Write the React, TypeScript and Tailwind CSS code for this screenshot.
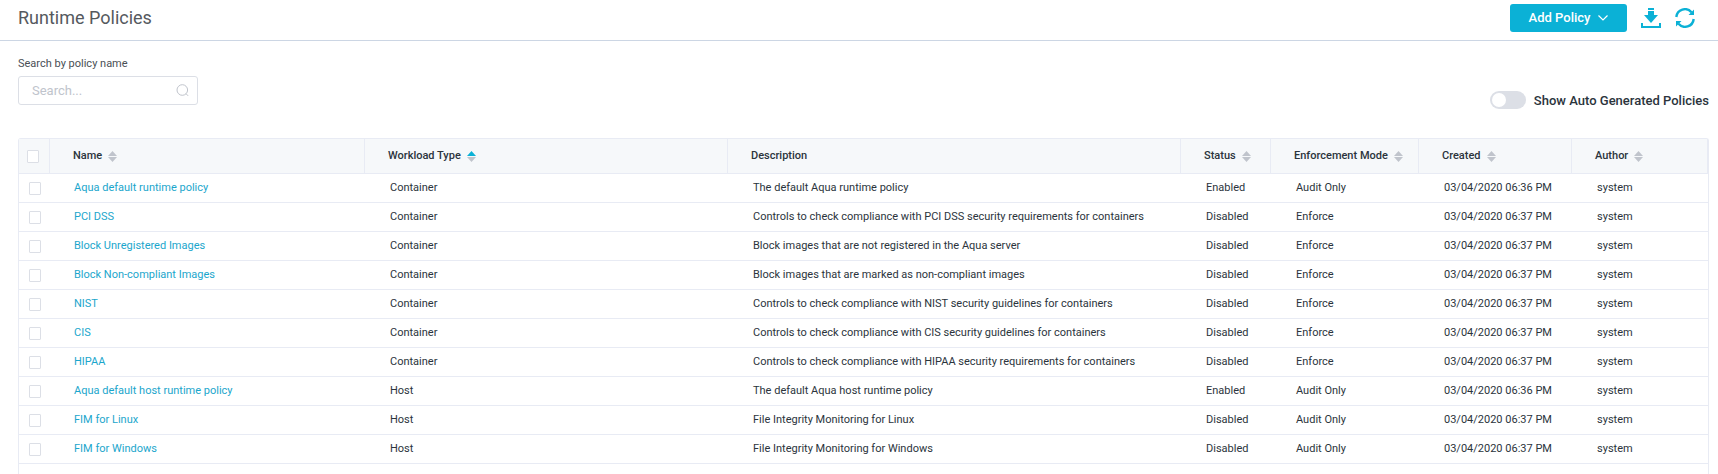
import { useState } from "react";

type Policy = {
  name: string;
  workload: string;
  description: string;
  status: string;
  mode: string;
  created: string;
  author: string;
};

const policies: Policy[] = [
  { name: "Aqua default runtime policy", workload: "Container", description: "The default Aqua runtime policy", status: "Enabled", mode: "Audit Only", created: "03/04/2020 06:36 PM", author: "system" },
  { name: "PCI DSS", workload: "Container", description: "Controls to check compliance with PCI DSS security requirements for containers", status: "Disabled", mode: "Enforce", created: "03/04/2020 06:37 PM", author: "system" },
  { name: "Block Unregistered Images", workload: "Container", description: "Block images that are not registered in the Aqua server", status: "Disabled", mode: "Enforce", created: "03/04/2020 06:37 PM", author: "system" },
  { name: "Block Non-compliant Images", workload: "Container", description: "Block images that are marked as non-compliant images", status: "Disabled", mode: "Enforce", created: "03/04/2020 06:37 PM", author: "system" },
  { name: "NIST", workload: "Container", description: "Controls to check compliance with NIST security guidelines for containers", status: "Disabled", mode: "Enforce", created: "03/04/2020 06:37 PM", author: "system" },
  { name: "CIS", workload: "Container", description: "Controls to check compliance with CIS security guidelines for containers", status: "Disabled", mode: "Enforce", created: "03/04/2020 06:37 PM", author: "system" },
  { name: "HIPAA", workload: "Container", description: "Controls to check compliance with HIPAA security requirements for containers", status: "Disabled", mode: "Enforce", created: "03/04/2020 06:37 PM", author: "system" },
  { name: "Aqua default host runtime policy", workload: "Host", description: "The default Aqua host runtime policy", status: "Enabled", mode: "Audit Only", created: "03/04/2020 06:36 PM", author: "system" },
  { name: "FIM for Linux", workload: "Host", description: "File Integrity Monitoring for Linux", status: "Disabled", mode: "Audit Only", created: "03/04/2020 06:37 PM", author: "system" },
  { name: "FIM for Windows", workload: "Host", description: "File Integrity Monitoring for Windows", status: "Disabled", mode: "Audit Only", created: "03/04/2020 06:37 PM", author: "system" },
];

type Column = { label: string; sort: "none" | "idle" | "asc"; width: string };

const columns: Column[] = [
  { label: "Name", sort: "idle", width: "w-[315px]" },
  { label: "Workload Type", sort: "asc", width: "w-[363px]" },
  { label: "Description", sort: "none", width: "" },
  { label: "Status", sort: "idle", width: "w-[90px]" },
  { label: "Enforcement Mode", sort: "idle", width: "w-[148px]" },
  { label: "Created", sort: "idle", width: "w-[153px]" },
  { label: "Author", sort: "idle", width: "w-[136px]" },
];

function SortIcon({ active }: { active: boolean }) {
  return (
    <svg width="9" height="11" viewBox="0 0 9 11" aria-hidden="true">
      <path d="M4.5 0 9 5H0Z" className={active ? "fill-[#0bb1d6]" : "fill-[#c0c4cc]"} />
      <path d="M0 6h9L4.5 11Z" className="fill-[#c0c4cc]" />
    </svg>
  );
}

function Tick({ label }: { label: string }) {
  return (
    <input
      type="checkbox"
      aria-label={label}
      className="block h-[13px] w-3 appearance-none rounded-[1px] border border-[#dcdfe6] bg-white checked:border-[#0bb1d6] checked:bg-[#0bb1d6]"
    />
  );
}

export default function App() {
  const [auto, setAuto] = useState(false);
  return (
    <div className="bg-white font-['Roboto',sans-serif] text-[#2b343c]">
      <header className="flex h-[41px] items-center justify-between border-b border-[#ccd6e4] pr-[23px] pb-1 pl-[18px]">
        <h1 className="text-lg text-[#55595e]">Runtime Policies</h1>
        <div className="flex items-center gap-[14px]">
          <button type="button" className="flex h-7 w-[117px] items-center justify-center gap-2 rounded-[3px] bg-[#0bb1d6] text-[13px] font-medium text-white">
            Add Policy
            <svg width="10" height="6" viewBox="0 0 10 6" fill="none" stroke="currentColor" strokeWidth="1.2" aria-hidden="true">
              <path d="M.5.5 5 5 9.500.5" />
            </svg>
          </button>
          <button type="button" aria-label="Download" className="text-[#0bb1d6]">
            <svg width="20" height="20" viewBox="0 0 20 20" fill="currentColor" aria-hidden="true">
              <path d="M7 0h6v2H7ZM7 3h6v4h4l-7 8-7-8h4ZM0 15h2v3h16v-3h2v5H0Z" />
            </svg>
          </button>
          <button type="button" aria-label="Refresh" className="text-[#0bb1d6]">
            <svg width="20" height="20" viewBox="0 0 20 20" fill="none" stroke="currentColor" strokeWidth="2.4" aria-hidden="true">
              <path d="M1.300 9A8.700 8.700 0 0 1 16.500 4.200M18.700 11A8.700 8.700 0 0 1 3.500 15.800" />
              <path d="M19 1.500v5.500h-5.500ZM1 18.500v-5.500h5.500Z" fill="currentColor" stroke="none" />
            </svg>
          </button>
        </div>
      </header>

      <main className="pr-[9px] pl-[18px]">
        <div className="flex items-end justify-between pt-[15px]">
          <div>
            <label htmlFor="policy-search" className="block text-[11px] leading-4 text-[#4a4f55]">Search by policy name</label>
            <div className="mt-1 flex h-[29px] w-[180px] items-center rounded-[3px] border border-[#dcdfe6] pr-2 pl-[13px]">
              <input id="policy-search" type="text" placeholder="Search..." className="w-full min-w-0 flex-1 text-[13px] outline-none placeholder:text-[#c0c4cc]" />
              <svg width="13" height="13" viewBox="0 0 13 13" fill="none" className="stroke-[#c0c4cc]" aria-hidden="true">
                <circle cx="6.300" cy="6" r="5.300" />
                <path d="m10 9.700 2.200 2.200" />
              </svg>
            </div>
          </div>
          <label className="-mb-[5px] flex items-center gap-2 text-[13px] font-medium text-[#2b343c]">
            <input
              type="checkbox"
              role="switch"
              checked={auto}
              onChange={() => setAuto(!auto)}
              className="flex h-[18px] w-9 appearance-none items-center rounded-full bg-[#dcdfe6] px-0.5 before:size-[14px] before:rounded-full before:bg-white checked:justify-end checked:bg-[#0bb1d6]"
            />
            Show Auto Generated Policies
          </label>
        </div>

        <div className="mt-[33px] rounded-t-[3px] border border-b-0 border-[#e8ebf4] pb-[10px]">
          <table className="w-full table-fixed border-separate border-spacing-0 text-left text-[11px]">
            <thead>
              <tr className="h-[35px] bg-[#f6f8fa]">
                <th className="w-[31px] border-r border-b border-[#e8ebf4] p-0 pl-2"><Tick label="Select all policies" /></th>
                {columns.map((c) => (
                  <th key={c.label} className={`${c.width} border-r border-b border-[#e8ebf4] p-0 pl-[23px] font-medium whitespace-nowrap`}>
                    {c.sort === "none" ? (
                      c.label
                    ) : (
                      <button type="button" className="flex items-center gap-[6px]">
                        {c.label}
                        <SortIcon active={c.sort === "asc"} />
                      </button>
                    )}
                  </th>
                ))}
              </tr>
            </thead>
            <tbody className="[&_td]:border-b [&_td]:border-[#e8ebf4] [&_td]:p-0 [&_td]:pt-px [&_td]:pl-[25px] [&_td]:whitespace-nowrap">
              {policies.map((p) => (
                <tr key={p.name} className="h-[29px]">
                  <td className="pt-0! pl-[10px]!"><Tick label={`Select ${p.name}`} /></td>
                  <td className="pl-6!"><a href="#" className="text-[#1ba6cc]">{p.name}</a></td>
                  <td>{p.workload}</td>
                  <td>{p.description}</td>
                  <td>{p.status}</td>
                  <td>{p.mode}</td>
                  <td>{p.created}</td>
                  <td>{p.author}</td>
                </tr>
              ))}
            </tbody>
          </table>
        </div>
      </main>
    </div>
  );
}
